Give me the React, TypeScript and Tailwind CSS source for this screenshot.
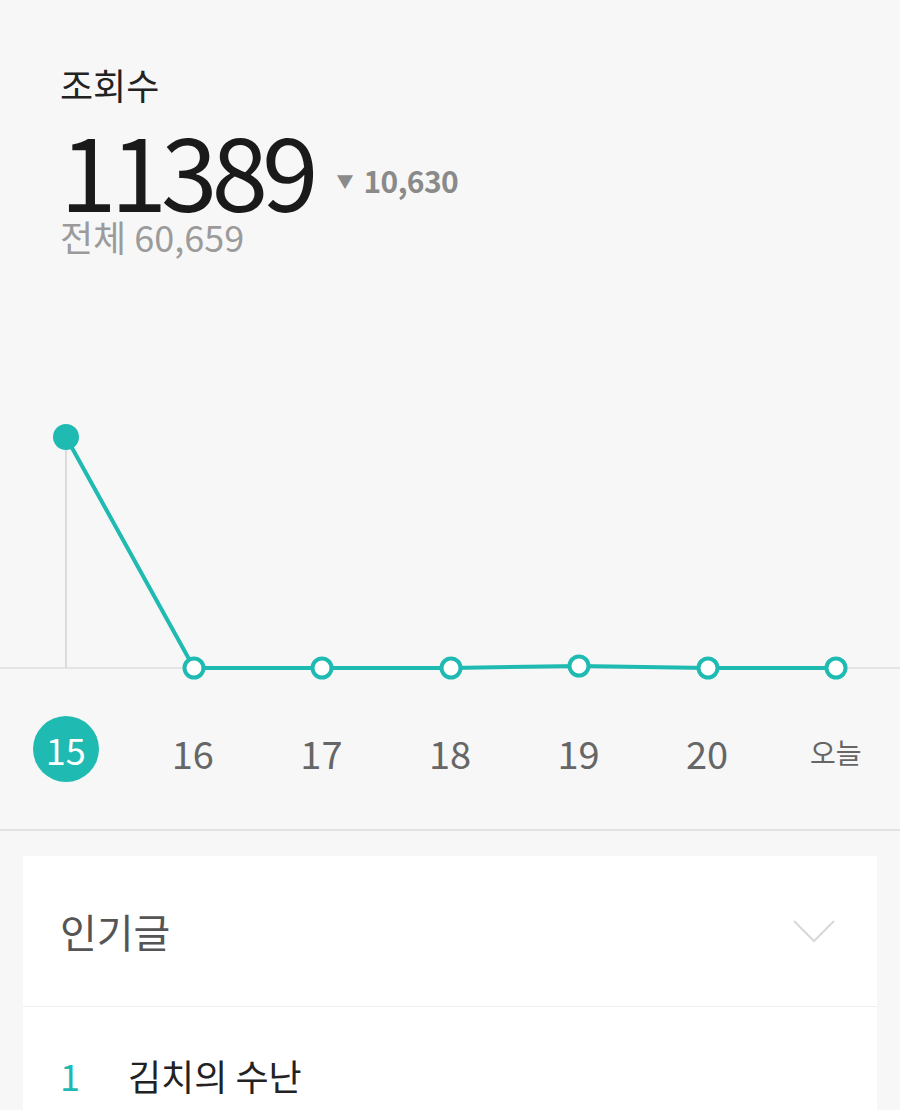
const font = { fontFamily: '"Noto Sans CJK KR", "Noto Sans", sans-serif' };

const days = ["15", "16", "17", "18", "19", "20", "오늘"];
const xs = [66, 194, 322, 451, 579, 708, 836];
const ys = [157, 388, 388, 388, 386, 388, 388];

function Chart() {
  const pts = xs.map((x, i) => `${x},${ys[i]}`).join(" ");
  return (
    <svg width="900" height="420" viewBox="0 0 900 420" className="block">
      <line x1="0" y1="388" x2="900" y2="388" stroke="#e4e4e4" strokeWidth="2" />
      <line x1="66" y1="157" x2="66" y2="388" stroke="#dcdcdc" strokeWidth="2" />
      <polyline points={pts} fill="none" stroke="#1fbab1" strokeWidth="4" strokeLinejoin="round" />
      <circle cx="66" cy="157" r="13" fill="#1fbab1" />
      {xs.slice(1).map((x, i) => (
        <circle key={x} cx={x} cy={ys[i + 1]} r="9.5" fill="#ffffff" stroke="#1fbab1" strokeWidth="4" />
      ))}
    </svg>
  );
}

export default function App() {
  return (
    <div className="min-h-screen w-[900px] bg-[#f7f7f7] overflow-hidden" style={font}>
      <div className="h-[280px] px-[60px] pt-[62px]">
        <div className="text-[36px] leading-[44px] text-[#222]">조회수</div>
        <div className="flex items-center mt-[14px] h-[96px]">
          <span className="text-[102px] leading-[96px] tracking-[-0.06em] text-[#1a1a1a]">11389</span>
          <span className="ml-[24px] mt-[24px] flex items-center gap-[10px] text-[#8a8a8a]">
            <span className="text-[17px] leading-none">▼</span>
            <span className="text-[30px] font-bold leading-none tracking-[-0.02em]">10,630</span>
          </span>
        </div>
        <div className="text-[36px] leading-[40px] text-[#9b9b9b]">전체 60,659</div>
      </div>

      <Chart />

      <div className="h-[104px] grid grid-cols-7 items-center">
        {days.map((d, i) => (
          <div key={d} className="flex justify-center">
            {i === 0 ? (
              <div className="mb-[6px] ml-[3px] w-[66px] h-[66px] rounded-full bg-[#1fbab1] text-white text-[36px] flex items-center justify-center">
                {d}
              </div>
            ) : (
              <span className={d === "오늘" ? "text-[28px] text-[#666]" : "text-[38px] text-[#666]"}>{d}</span>
            )}
          </div>
        ))}
      </div>
      <div className="h-[25px]" />
      <div className="h-[2px] bg-[#e2e2e2]" />

      <div className="px-[23px] pt-[25px]">
        <div className="bg-white">
          <div className="h-[151px] flex items-center justify-between pl-[37px] pr-[42px] border-b border-[#efefef]">
            <span className="text-[40px] text-[#555]">인기글</span>
            <svg width="42" height="23" viewBox="0 0 42 23">
              <polyline points="1,1 21,21 41,1" fill="none" stroke="#d8d8d8" strokeWidth="2" />
            </svg>
          </div>
          <div className="h-[140px] flex items-start pt-[46px] pl-[37px]">
            <span className="w-[68px] text-[36px] text-[#1fbab1] leading-[44px]">1</span>
            <span className="text-[36px] text-[#222] leading-[44px]">김치의 수난</span>
          </div>
        </div>
      </div>
    </div>
  );
}
